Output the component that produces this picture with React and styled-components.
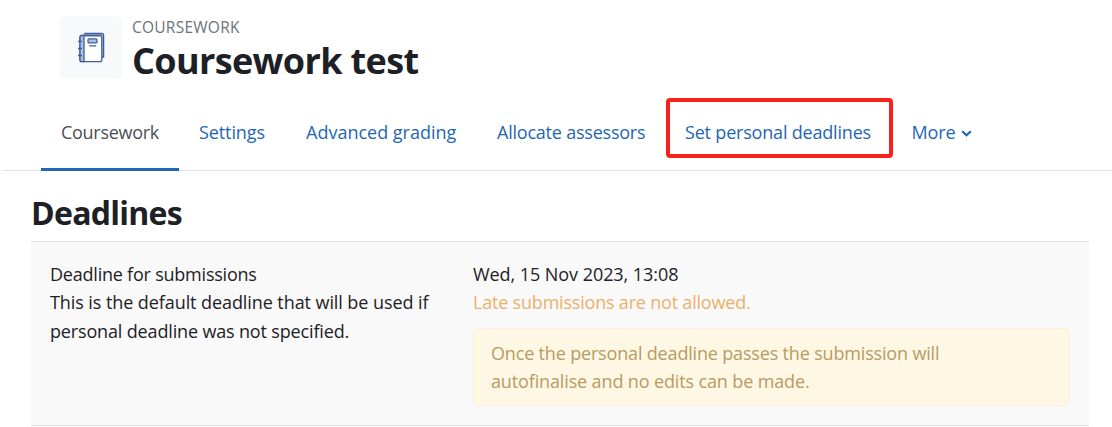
import React from 'react';
import styled, { createGlobalStyle } from 'styled-components';

const tabs = [
  { title: 'Coursework', width: 138, spacing: -0.28, active: true },
  { title: 'Settings', width: 107, spacing: -0.1 },
  { title: 'Advanced grading', width: 191, spacing: 0 },
  { title: 'Allocate assessors', width: 188, spacing: -0.22 },
  { title: 'Set personal deadlines', width: 226.5, spacing: -0.19, marked: true },
  { title: 'More', width: 99, spacing: -0.1, menu: true },
];

const CourseworkIcon = () => (
  <svg width="28" height="32" viewBox="0 0 28 32" fill="none" stroke="#3f5f96" strokeWidth="1.3">
    <path d="M8 3V1.5H24.6Q26.6 1.5 26.6 3.5V25H24.6" fill="#aac0e6" />
    <rect x="3" y="3.5" width="21.8" height="26.2" rx="2" fill="#fff" />
    <path d="M5 3.5H7V29.7H5Q3 29.7 3 27.7V5.5Q3 3.5 5 3.5Z" fill="#aac0e6" />
    <path d="M7.6 4.6H24" stroke="#9db4dc" strokeWidth="1" />
    <rect x="11" y="6.9" width="9" height="4" rx="1" fill="#aac0e6" />
    <path d="M12.2 13.8H19.2M1 9.3H5M1 16.5H5M1 23.5H5" />
  </svg>
);

export default function App() {
  return (
    <Page>
      <GlobalStyle />
      <Header>
        <IconBox>
          <CourseworkIcon />
        </IconBox>
        <div>
          <Kind>Coursework</Kind>
          <Title>Coursework test</Title>
        </div>
      </Header>
      <Tabs>
        {tabs.map((tab) => (
          <Tab key={tab.title} $width={tab.width} $active={tab.active} $marked={tab.marked}>
            <Text $spacing={tab.spacing}>{tab.title}</Text>
            {tab.menu && (
              <Caret width="11" height="7" viewBox="0 0 11 7" fill="none">
                <path d="M1.2 1.2L5.5 5.2L9.8 1.2" stroke="#1f67b1" strokeWidth="2.2" />
              </Caret>
            )}
          </Tab>
        ))}
      </Tabs>
      <Heading>Deadlines</Heading>
      <Row>
        <Label>
          <Line $spacing={-0.22}>Deadline for submissions</Line>
          <Line $spacing={-0.08}>This is the default deadline that will be used if</Line>
          <Line $spacing={-0.155}>personal deadline was not specified.</Line>
        </Label>
        <Value>
          <Line $spacing={-0.06}>Wed, 15 Nov 2023, 13:08</Line>
          <Line $spacing={-0.2} $color="#edb06a">Late submissions are not allowed.</Line>
          <Alert>
            <Line $spacing={-0.17}>Once the personal deadline passes the submission will</Line>
            <Line $spacing={-0.135}>autofinalise and no edits can be made.</Line>
          </Alert>
        </Value>
      </Row>
    </Page>
  );
}

const GlobalStyle = createGlobalStyle`
  *,
  *::after {
    box-sizing: border-box;
  }
  body {
    margin: 0;
    background: #fff;
    color: #1d2125;
    font-family: 'Open Sans', 'Noto Sans', sans-serif;
    font-size: 18px;
  }
`;
const Page = styled.main`
  height: 427px;
  overflow: hidden;
`;
const Header = styled.header`
  display: flex;
  gap: 10px;
  height: 94px;
  padding: 16px 0 0 60px;
`;
const IconBox = styled.div`
  display: flex;
  align-items: center;
  justify-content: center;
  width: 62px;
  height: 63px;
  border-radius: 5px;
  background: #f8f9fa;
`;
const Kind = styled.div`
  height: 22px;
  line-height: 23px;
  font-size: 15.5px;
  letter-spacing: 0.25px;
  text-transform: uppercase;
  color: #6a737b;
`;
const Title = styled.h1`
  margin: 0;
  line-height: 46px;
  font-size: 36px;
  font-weight: 700;
  letter-spacing: -0.63px;
  white-space: nowrap;
`;
const Tabs = styled.nav`
  display: flex;
  height: 77px;
  margin-left: 2px;
  padding-left: 39px;
  border-bottom: 1px solid #dee2e6;
`;
const Tab = styled.a`
  position: relative;
  display: flex;
  align-items: center;
  width: ${(p) => p.$width}px;
  height: 77px;
  padding: 2px 0 0 20px;
  border-bottom: 3px solid ${(p) => (p.$active ? '#1f67b1' : 'transparent')};
  color: ${(p) => (p.$active ? '#495057' : '#1f67b1')};

  &::after {
    content: '';
    display: ${(p) => (p.$marked ? 'block' : 'none')};
    position: absolute;
    top: 4px;
    left: 1px;
    width: 227px;
    height: 60px;
    border: 4px solid #f9221a;
    border-radius: 4px;
  }
`;
const Text = styled.span`
  letter-spacing: ${(p) => p.$spacing}px;
  white-space: nowrap;
`;
const Caret = styled.svg`
  margin: 2px 0 0 5px;
`;
const Heading = styled.h2`
  height: 70px;
  margin: 0;
  padding: 20px 0 0 31px;
  line-height: 44px;
  font-size: 32px;
  font-weight: 700;
  letter-spacing: -0.73px;
`;
const Row = styled.section`
  display: flex;
  width: 1058px;
  height: 185px;
  margin-left: 31px;
  padding: 18px 19px 0;
  border-top: 1px solid #dee2e6;
  border-bottom: 1px solid #dee2e6;
  background: #f9f9f9;
`;
const Label = styled.div`
  width: 423px;
`;
const Value = styled.div`
  width: 597px;
`;
const Line = styled.div`
  height: 28.4px;
  line-height: 28.4px;
  letter-spacing: ${(p) => p.$spacing}px;
  white-space: nowrap;
  color: ${(p) => p.$color || 'inherit'};
`;
const Alert = styled.div`
  height: 78px;
  margin-top: 11px;
  padding: 10px 17px;
  border: 1px solid #fcefdc;
  border-radius: 6px;
  background: #fdf7e3;
  color: #b89b64;
`;
